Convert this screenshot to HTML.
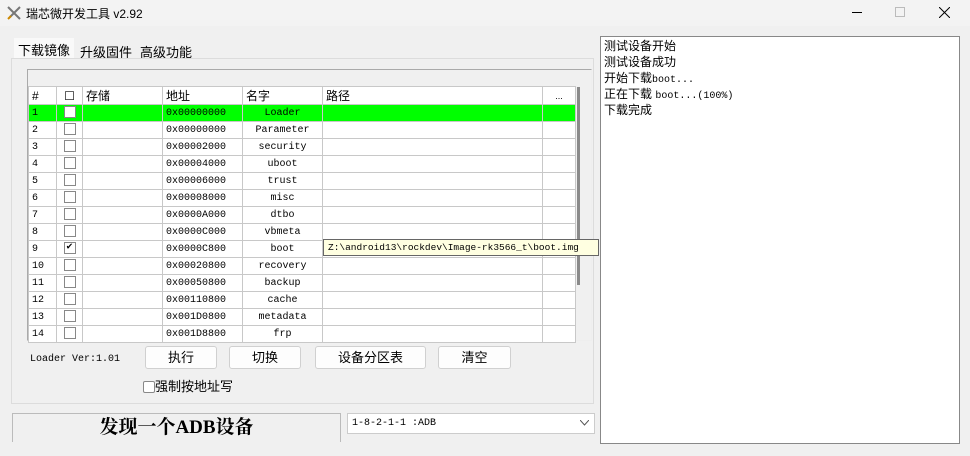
<!DOCTYPE html>
<html><head><meta charset="utf-8"><style>
*{box-sizing:border-box;margin:0;padding:0}
body{width:970px;height:456px;background:#f0f0f0;font-family:"Liberation Sans","Noto Sans CJK SC",sans-serif;position:relative;overflow:hidden;font-size:12px;color:#000}
.a{position:absolute}
.mono{font-family:"Liberation Mono","Noto Serif CJK SC",monospace;font-size:10px}
table{border-collapse:collapse;position:absolute;left:28px;top:86px;table-layout:fixed}
td{height:17px;border:1px solid #c8c8c8;padding:0 3px;font-family:"Liberation Mono","Noto Serif CJK SC",monospace;font-size:10px;white-space:nowrap;background:#fff}
tr.h td{font-family:"Liberation Sans","Noto Sans CJK SC",sans-serif;font-size:12px;background:#fff}
tr.g td{background:#00ff00}
td.c{text-align:center}
.cb{display:inline-block;width:12px;height:12px;border:1px solid #888;background:#fff;vertical-align:middle;position:relative;top:-1px}
.btn{position:absolute;top:346px;height:23px;background:#fdfdfd;border:1px solid #d0d0d0;border-radius:3px;text-align:center;line-height:21px;font-size:13px}
.log div{height:16px;line-height:16px;white-space:nowrap;overflow:hidden}
</style></head><body>
<div class="a" style="left:0;top:0;width:970px;height:26px;background:#f3f3f3"></div>
<svg class="a" style="left:6px;top:5px" width="16" height="16"><path d="M2 2L14 14M14 2L4 12" stroke="#777" stroke-width="2"/><path d="M2 14l3-3" stroke="#c80" stroke-width="2"/></svg>
<div class="a" style="left:26px;top:5px;font-size:12px">瑞芯微开发工具 v2.92</div>
<div class="a" style="left:852px;top:12px;width:10px;height:1px;background:#000"></div>
<div class="a" style="left:895px;top:7px;width:10px;height:10px;border:1px solid #bbb"></div>
<svg class="a" style="left:939px;top:7px" width="11" height="11"><path d="M0 0L11 11M11 0L0 11" stroke="#000" stroke-width="1"/></svg>
<div class="a" style="left:14px;top:38px;width:60px;height:20px;background:#f9f9f9"></div>
<div class="a" style="left:18px;top:40px;font-size:13px">下载镜像</div>
<div class="a" style="left:80px;top:42px;font-size:13px">升级固件</div>
<div class="a" style="left:140px;top:42px;font-size:13px">高级功能</div>
<div class="a" style="left:11px;top:58px;width:583px;height:346px;border:1px solid #dcdcdc;background:#f0f0f0"></div>
<div class="a" style="left:27px;top:69px;width:565px;height:272px;border:1px solid #aaa;border-right-color:#eee;border-bottom-color:#eee;background:#f0f0f0"></div>
<table>
<colgroup><col style="width:28px"><col style="width:26px"><col style="width:80px"><col style="width:80px"><col style="width:80px"><col style="width:220px"><col style="width:33px"></colgroup>
<tr class="h"><td>#</td><td class="c">☐</td><td>存储</td><td>地址</td><td>名字</td><td>路径</td><td class="c" style="font-size:9px">...</td></tr>
<tr class="g"><td>1</td><td class="c"><span class="cb"></span></td><td></td><td>0x00000000</td><td class="c">Loader</td><td></td><td></td></tr>
<tr><td>2</td><td class="c"><span class="cb"></span></td><td></td><td>0x00000000</td><td class="c">Parameter</td><td></td><td></td></tr>
<tr><td>3</td><td class="c"><span class="cb"></span></td><td></td><td>0x00002000</td><td class="c">security</td><td></td><td></td></tr>
<tr><td>4</td><td class="c"><span class="cb"></span></td><td></td><td>0x00004000</td><td class="c">uboot</td><td></td><td></td></tr>
<tr><td>5</td><td class="c"><span class="cb"></span></td><td></td><td>0x00006000</td><td class="c">trust</td><td></td><td></td></tr>
<tr><td>6</td><td class="c"><span class="cb"></span></td><td></td><td>0x00008000</td><td class="c">misc</td><td></td><td></td></tr>
<tr><td>7</td><td class="c"><span class="cb"></span></td><td></td><td>0x0000A000</td><td class="c">dtbo</td><td></td><td></td></tr>
<tr><td>8</td><td class="c"><span class="cb"></span></td><td></td><td>0x0000C000</td><td class="c">vbmeta</td><td></td><td></td></tr>
<tr><td>9</td><td class="c"><span class="cb" style="font-size:10px;line-height:10px">✔</span></td><td></td><td>0x0000C800</td><td class="c">boot</td><td></td><td></td></tr>
<tr><td>10</td><td class="c"><span class="cb"></span></td><td></td><td>0x00020800</td><td class="c">recovery</td><td></td><td></td></tr>
<tr><td>11</td><td class="c"><span class="cb"></span></td><td></td><td>0x00050800</td><td class="c">backup</td><td></td><td></td></tr>
<tr><td>12</td><td class="c"><span class="cb"></span></td><td></td><td>0x00110800</td><td class="c">cache</td><td></td><td></td></tr>
<tr><td>13</td><td class="c"><span class="cb"></span></td><td></td><td>0x001D0800</td><td class="c">metadata</td><td></td><td></td></tr>
<tr><td>14</td><td class="c"><span class="cb"></span></td><td></td><td>0x001D8800</td><td class="c">frp</td><td></td><td></td></tr>
</table>
<div class="a" style="left:577px;top:87px;width:3px;height:198px;background:#8a8a8a"></div>
<div class="a mono" style="left:323px;top:239px;width:276px;height:17px;background:#ffffe1;border:1px solid #666;padding-left:4px;line-height:15px;font-size:9.5px">Z:\android13\rockdev\Image-rk3566_t\boot.img</div>
<div class="a mono" style="left:30px;top:354px">Loader Ver:1.01</div>
<div class="btn" style="left:145px;width:72px">执行</div>
<div class="btn" style="left:229px;width:72px">切换</div>
<div class="btn" style="left:315px;width:111px">设备分区表</div>
<div class="btn" style="left:438px;width:73px">清空</div>
<div class="a" style="left:143px;top:376px;font-size:13px"><span class="cb" style="border-radius:2px"></span>强制按地址写</div>
<div class="a" style="left:12px;top:413px;width:329px;height:29px;border:1px solid #bbb;border-bottom:none;text-align:center;font-family:'Liberation Serif','Noto Serif CJK SC',serif;font-weight:bold;font-size:19px;line-height:28px">发现一个ADB设备</div>
<div class="a mono" style="left:347px;top:413px;width:248px;height:21px;background:#fff;border:1px solid #ccc;padding-left:4px;line-height:19px">1-8-2-1-1 :ADB</div>
<svg class="a" style="left:580px;top:420px" width="9" height="6"><path d="M0 0L4.5 5L9 0" stroke="#555" fill="none"/></svg>
<div class="a log" style="left:600px;top:36px;width:360px;height:408px;background:#fff;border:1px solid #888;padding:1px 3px;font-size:12px">
<div>测试设备开始</div><div>测试设备成功</div><div>开始下载<span class="mono">boot...</span></div><div>正在下载 <span class="mono">boot...(100%)</span></div><div>下载完成</div>
</div>
</body></html>
